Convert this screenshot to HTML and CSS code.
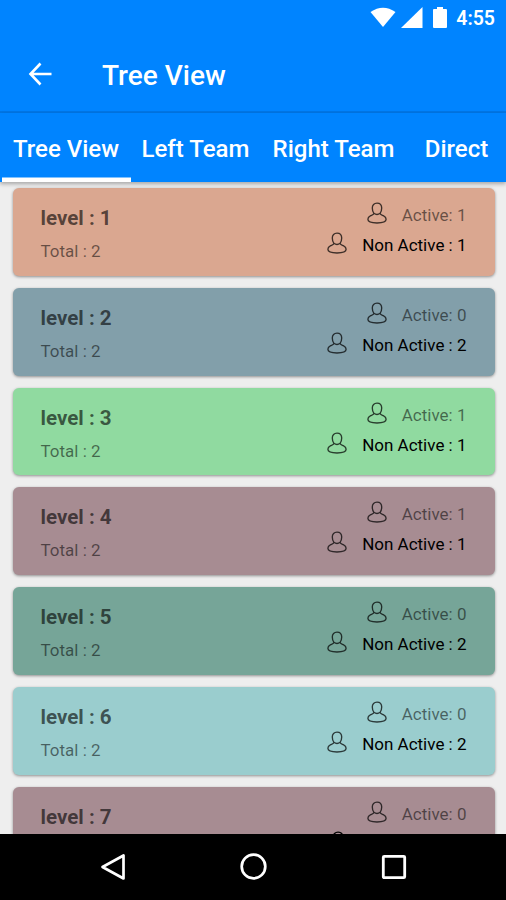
FILE: index.html
```html
<!DOCTYPE html>
<html lang="en">
<head>
<meta charset="utf-8">
<title>Tree View</title>
<link rel="stylesheet" href="styles.css">
</head>
<body>
<svg class="defs" width="0" height="0" aria-hidden="true">
  <symbol id="person" viewBox="0 0 20 22">
    <path d="M6.900 11.300C5.800 10 5.300 8 5.300 6c0-3 1.800-4.900 4.700-4.900S14.700 3 14.700 6c0 2-.5 4-1.600 5.300Q10 13.800 6.900 11.300ZM6.900 11.300C6.700 12.700 5 13 3.300 13.900 1.700 14.700.9 15.800.9 17.300.9 19.800 4.500 21 10 21s9.100-1.200 9.100-3.700c0-1.500-.8-2.600-2.400-3.400-1.700-.9-3.400-1.200-3.600-2.600" fill="none" stroke="currentColor" stroke-width="1.350"/>
  </symbol>
</svg>
<div class="screen">
  <div class="status">
    <svg class="wifi" width="26" height="21" viewBox="0 0 26 21"><path d="M0.500 5Q13-3.500 25.500 5L13 20Z" fill="#fff"/></svg>
    <svg class="signal" width="22" height="22" viewBox="0 0 22 22"><path d="M21.500 0V21H0Z" fill="#fff"/></svg>
    <svg class="battery" width="14" height="22" viewBox="0 0 14 22"><path d="M4 0h6v2h3q1 0 1 1v17q0 1-1 1H1q-1 0-1-1V3q0-1 1-1h3Z" fill="#fff"/></svg>
    <span class="clock">4:55</span>
  </div>
  <header class="toolbar">
    <svg class="back" width="24" height="24" viewBox="0 0 24 24"><path d="M23.500 12H2.500M12.500 1.500 2.500 12l10 10.500" fill="none" stroke="#fff" stroke-width="2.600"/></svg>
    <h1 class="title">Tree View</h1>
  </header>
  <nav class="tabs">
    <div class="tab tab-tree active">Tree View</div>
    <div class="tab tab-left">Left Team</div>
    <div class="tab tab-right">Right Team</div>
    <div class="tab tab-direct">Direct</div>
  </nav>
  <main class="list">
    <section class="card peach"><div class="info"><h2 class="level">level : 1</h2><p class="total">Total : 2</p></div><div class="counts"><p class="count"><svg class="person"><use href="#person"/></svg><span class="muted">Active: 1</span></p><p class="count"><svg class="person"><use href="#person"/></svg><span>Non Active : 1</span></p></div></section>
    <section class="card slate"><div class="info"><h2 class="level">level : 2</h2><p class="total">Total : 2</p></div><div class="counts"><p class="count"><svg class="person"><use href="#person"/></svg><span class="muted">Active: 0</span></p><p class="count"><svg class="person"><use href="#person"/></svg><span>Non Active : 2</span></p></div></section>
    <section class="card green"><div class="info"><h2 class="level">level : 3</h2><p class="total">Total : 2</p></div><div class="counts"><p class="count"><svg class="person"><use href="#person"/></svg><span class="muted">Active: 1</span></p><p class="count"><svg class="person"><use href="#person"/></svg><span>Non Active : 1</span></p></div></section>
    <section class="card mauve"><div class="info"><h2 class="level">level : 4</h2><p class="total">Total : 2</p></div><div class="counts"><p class="count"><svg class="person"><use href="#person"/></svg><span class="muted">Active: 1</span></p><p class="count"><svg class="person"><use href="#person"/></svg><span>Non Active : 1</span></p></div></section>
    <section class="card teal"><div class="info"><h2 class="level">level : 5</h2><p class="total">Total : 2</p></div><div class="counts"><p class="count"><svg class="person"><use href="#person"/></svg><span class="muted">Active: 0</span></p><p class="count"><svg class="person"><use href="#person"/></svg><span>Non Active : 2</span></p></div></section>
    <section class="card aqua"><div class="info"><h2 class="level">level : 6</h2><p class="total">Total : 2</p></div><div class="counts"><p class="count"><svg class="person"><use href="#person"/></svg><span class="muted">Active: 0</span></p><p class="count"><svg class="person"><use href="#person"/></svg><span>Non Active : 2</span></p></div></section>
    <section class="card mauve"><div class="info"><h2 class="level">level : 7</h2></div><div class="counts"><p class="count"><svg class="person"><use href="#person"/></svg><span class="muted">Active: 0</span></p><p class="count"><svg class="person lone"><use href="#person"/></svg></p></div></section>
  </main>
  <footer class="navbar">
    <svg width="26" height="28" viewBox="0 0 26 28"><path d="M23.500 2.500v23L2.500 14Z" fill="none" stroke="#fff" stroke-width="2.700" stroke-linejoin="round"/></svg>
    <svg width="28" height="28" viewBox="0 0 28 28"><circle cx="13.500" cy="13.500" r="11.800" fill="none" stroke="#fff" stroke-width="2.700"/></svg>
    <svg width="26" height="28" viewBox="0 0 26 28"><rect x="2.300" y="3.300" width="21.400" height="21.400" rx="1" fill="none" stroke="#fff" stroke-width="2.800"/></svg>
  </footer>
</div>
</body>
</html>
```
FILE: styles.css
```css
* { box-sizing: border-box; margin: 0; padding: 0; }
body { font-family: Roboto, "Liberation Sans", sans-serif; background: #eee; }
svg { display: block; flex: none; }
.defs { position: absolute; }
.screen { width: 506px; height: 900px; display: flex; flex-direction: column; overflow: hidden; }

.status { height: 37px; flex: none; background: #0084ff; color: #fff; display: flex; align-items: flex-start; padding: 7px 11px 0 0; justify-content: flex-end; }
.signal { margin-left: 5px; }
.battery { margin-left: 10px; }
.clock { margin-left: 9px; font-size: 19.500px; font-weight: 600; line-height: 23px; }

.toolbar { height: 76px; flex: none; background: #0084ff; color: #fff; display: flex; align-items: center; padding-left: 28px; border-bottom: 2px solid #0076e6; }
.title { font-size: 28px; font-weight: 500; margin-left: 50px; padding-top: 3px; line-height: 34px; white-space: nowrap; }

.tabs { height: 69px; flex: none; background: #0084ff; color: #fff; display: flex; padding-left: 2px; box-shadow: 0 2px 4px rgba(0, 0, 0, .3); z-index: 1; }
.tab { font-size: 24px; font-weight: 500; line-height: 73px; text-align: center; white-space: nowrap; height: 69px; }
.tab-tree { width: 129px; padding-right: 1px; }
.tab-left { width: 129px; }
.tab-right { width: 147px; }
.tab-direct { width: 99px; }
.active { box-shadow: inset 0 -4.500px #fff; }

.list { height: 652px; flex: none; overflow: hidden; padding: 6px 11px 0 12.500px; display: flex; flex-direction: column; gap: 12px; }
.card { height: 87.800px; flex: none; border-radius: 6px; padding: 12px 28.500px 0 28px; display: flex; justify-content: space-between; box-shadow: 0 1px 3px rgba(0, 0, 0, .4); }
.peach { background: #daa790; }
.slate { background: #829faa; }
.green { background: #90daa0; }
.mauve { background: #a78c92; }
.teal { background: #76a598; }
.aqua { background: #9acdce; }
.level { font-size: 20.600px; font-weight: 700; line-height: 36px; color: rgba(0, 0, 0, .62); }
.total { font-size: 17px; line-height: 30px; color: rgba(0, 0, 0, .53); }
.counts { display: flex; flex-direction: column; align-items: flex-end; }
.count { height: 30px; display: flex; align-items: center; gap: 15px; font-size: 17px; color: #000; }
.person { width: 20px; height: 22px; margin-bottom: 4px; color: rgba(0, 0, 0, .72); }
.lone { margin-right: 119px; color: #000; }
.muted { color: rgba(0, 0, 0, .53); }

.navbar { height: 66px; flex: none; background: #000; display: flex; align-items: center; justify-content: space-between; padding: 0 99px 0 100px; }
```
